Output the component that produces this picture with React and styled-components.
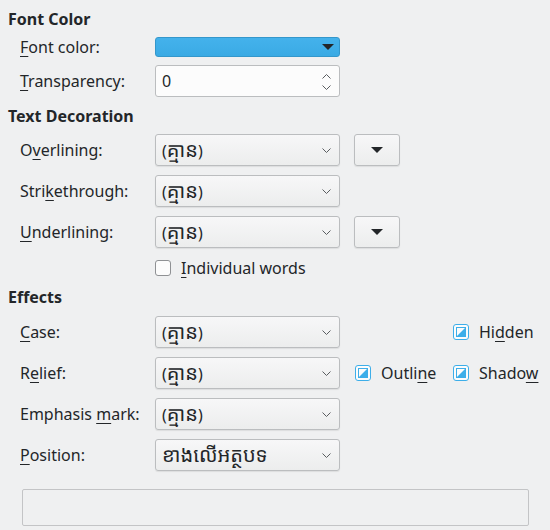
import React from 'react';
import styled, { createGlobalStyle } from 'styled-components';

const GlobalStyle = createGlobalStyle`
  html, body {
    margin: 0;
    padding: 0;
    background: #eff0f1;
  }
  body {
    font-family: "Noto Sans", "Noto Sans Khmer", "DejaVu Sans", sans-serif;
    font-size: 16px;
    color: #232629;
  }
`;

const Page = styled.div`
  width: 550px;
  height: 530px;
  box-sizing: border-box;
  padding-top: 9px;
  display: flex;
  flex-direction: column;
`;

const Heading = styled.div`
  height: 20px;
  line-height: 20px;
  padding-left: 8px;
  font-weight: 700;
  margin-top: ${p => p.$gap || 0}px;
`;

const Row = styled.div`
  display: flex;
  align-items: center;
  height: ${p => p.$h || 32}px;
  margin-top: ${p => (p.$gap === undefined ? 9 : p.$gap)}px;
  padding-left: 20px;
`;

const Label = styled.label`
  width: 135px;
  flex: none;
  white-space: nowrap;
`;

const Key = styled.u`
  text-decoration-thickness: 1px;
  text-underline-offset: 3px;
`;

const Combo = styled.div`
  width: 185px;
  height: 32px;
  flex: none;
  box-sizing: border-box;
  border: 1px solid #bbbdbf;
  border-radius: 3px;
  background: linear-gradient(#f7f7f8, #eceded);
  box-shadow: 0 1px 1px rgba(0, 0, 0, 0.08);
  display: flex;
  align-items: center;
  justify-content: space-between;
  padding: 0 8px 0 6px;
`;

const Value = styled.span`
  line-height: 20px;
  white-space: nowrap;
`;

// Khmer script runs a size up so it reads like the Latin around it
const Khmer = styled.span`
  font-size: 20px;
  line-height: 1;
`;

const SpinBox = styled(Combo)`
  background: #fcfcfc;
  box-shadow: none;
`;

const Arrows = styled.div`
  display: flex;
  flex-direction: column;
  gap: 6px;
  margin-top: 1px;
`;

const ColorButton = styled.div`
  width: 185px;
  height: 20px;
  flex: none;
  box-sizing: border-box;
  border: 1px solid #3497cb;
  border-radius: 3px;
  background: linear-gradient(#44b2ec, #3aaae4);
  display: flex;
  align-items: center;
  justify-content: flex-end;
  padding-right: 5px;
`;

const MenuButton = styled.div`
  width: 46px;
  height: 32px;
  margin-left: 14px;
  box-sizing: border-box;
  border: 1px solid #bbbdbf;
  border-radius: 3px;
  background: linear-gradient(#f7f7f8, #eceded);
  box-shadow: 0 1px 1px rgba(0, 0, 0, 0.08);
  display: flex;
  align-items: center;
  justify-content: center;
`;

const Extras = styled.div`
  display: grid;
  grid-template-columns: 98px auto;
  margin-left: 15px;
`;

const CheckItem = styled.div`
  display: flex;
  align-items: center;
  gap: 10px;
  white-space: nowrap;
  grid-column: ${p => p.$col || 'auto'};
`;

const Box = styled.span`
  width: 16px;
  height: 16px;
  flex: none;
  box-sizing: border-box;
  border: 1px solid #8f9194;
  border-radius: 3px;
  background: #fcfcfc;
`;

const Preview = styled.div`
  margin: 18px 0 0 22px;
  width: 507px;
  height: 37px;
  box-sizing: border-box;
  border: 1px solid #c3c4c6;
  border-radius: 2px;
  background: #eff0f1;
`;

const Chevron = ({ up }) => (
  <svg width="9" height="5" viewBox="0 0 9 5" style={{ display: 'block' }}>
    <polyline
      points={up ? '0.5,4.5 4.5,0.5 8.5,4.5' : '0.5,0.5 4.5,4.5 8.5,0.5'}
      fill="none"
      stroke="#5a5d60"
      strokeWidth="1"
    />
  </svg>
);

const Triangle = () => (
  <svg width="12" height="6" viewBox="0 0 12 6">
    <polygon points="0,0 12,0 6,6" fill="#232629" />
  </svg>
);

// tri-state box: blue frame, inner square, filled lower-right half
const PartialBox = () => (
  <svg width="16" height="16" viewBox="0 0 16 16" style={{ flex: 'none' }}>
    <rect x="0.5" y="0.5" width="15" height="15" rx="2.5" fill="#fcfcfc" stroke="#3daee9" />
    <rect x="3.5" y="3.5" width="9" height="9" fill="none" stroke="#3daee9" />
    <polygon points="12,4 12,12 4,12" fill="#3daee9" />
  </svg>
);

const Check = ({ on }) => (on ? <PartialBox /> : <Box />);

const Select = ({ children }) => (
  <Combo>
    <Value>{children}</Value>
    <Chevron />
  </Combo>
);

const None = () => <>(<Khmer>គ្មាន</Khmer>)</>;

export default function App() {
  return (
    <Page>
      <GlobalStyle />
      <Heading>Font Color</Heading>
      <Row $gap={8} $h={20}>
        <Label><Key>F</Key>ont color:</Label>
        <ColorButton><Triangle /></ColorButton>
      </Row>
      <Row $gap={8}>
        <Label><Key>T</Key>ransparency:</Label>
        <SpinBox>
          <span>0</span>
          <Arrows>
            <Chevron up />
            <Chevron />
          </Arrows>
        </SpinBox>
      </Row>

      <Heading $gap={9}>Text Decoration</Heading>
      <Row $gap={8}>
        <Label>O<Key>v</Key>erlining:</Label>
        <Select><None /></Select>
        <MenuButton><Triangle /></MenuButton>
      </Row>
      <Row>
        <Label>Stri<Key>k</Key>ethrough:</Label>
        <Select><None /></Select>
      </Row>
      <Row>
        <Label><Key>U</Key>nderlining:</Label>
        <Select><None /></Select>
        <MenuButton><Triangle /></MenuButton>
      </Row>
      <Row $gap={10} $h={20}>
        <Label />
        <CheckItem>
          <Check />
          <span><Key>I</Key>ndividual words</span>
        </CheckItem>
      </Row>

      <Heading $gap={9}>Effects</Heading>
      <Row>
        <Label><Key>C</Key>ase:</Label>
        <Select><None /></Select>
        <Extras>
          <CheckItem $col={2}>
            <Check on />
            <span>Hi<Key>d</Key>den</span>
          </CheckItem>
        </Extras>
      </Row>
      <Row>
        <Label>R<Key>e</Key>lief:</Label>
        <Select><None /></Select>
        <Extras>
          <CheckItem>
            <Check on />
            <span>Outli<Key>n</Key>e</span>
          </CheckItem>
          <CheckItem>
            <Check on />
            <span>Shado<Key>w</Key></span>
          </CheckItem>
        </Extras>
      </Row>
      <Row>
        <Label>Emphasis <Key>m</Key>ark:</Label>
        <Select><None /></Select>
      </Row>
      <Row>
        <Label><Key>P</Key>osition:</Label>
        <Select><Khmer>ខាងលើអត្ថបទ</Khmer></Select>
      </Row>
      <Preview />
    </Page>
  );
}
